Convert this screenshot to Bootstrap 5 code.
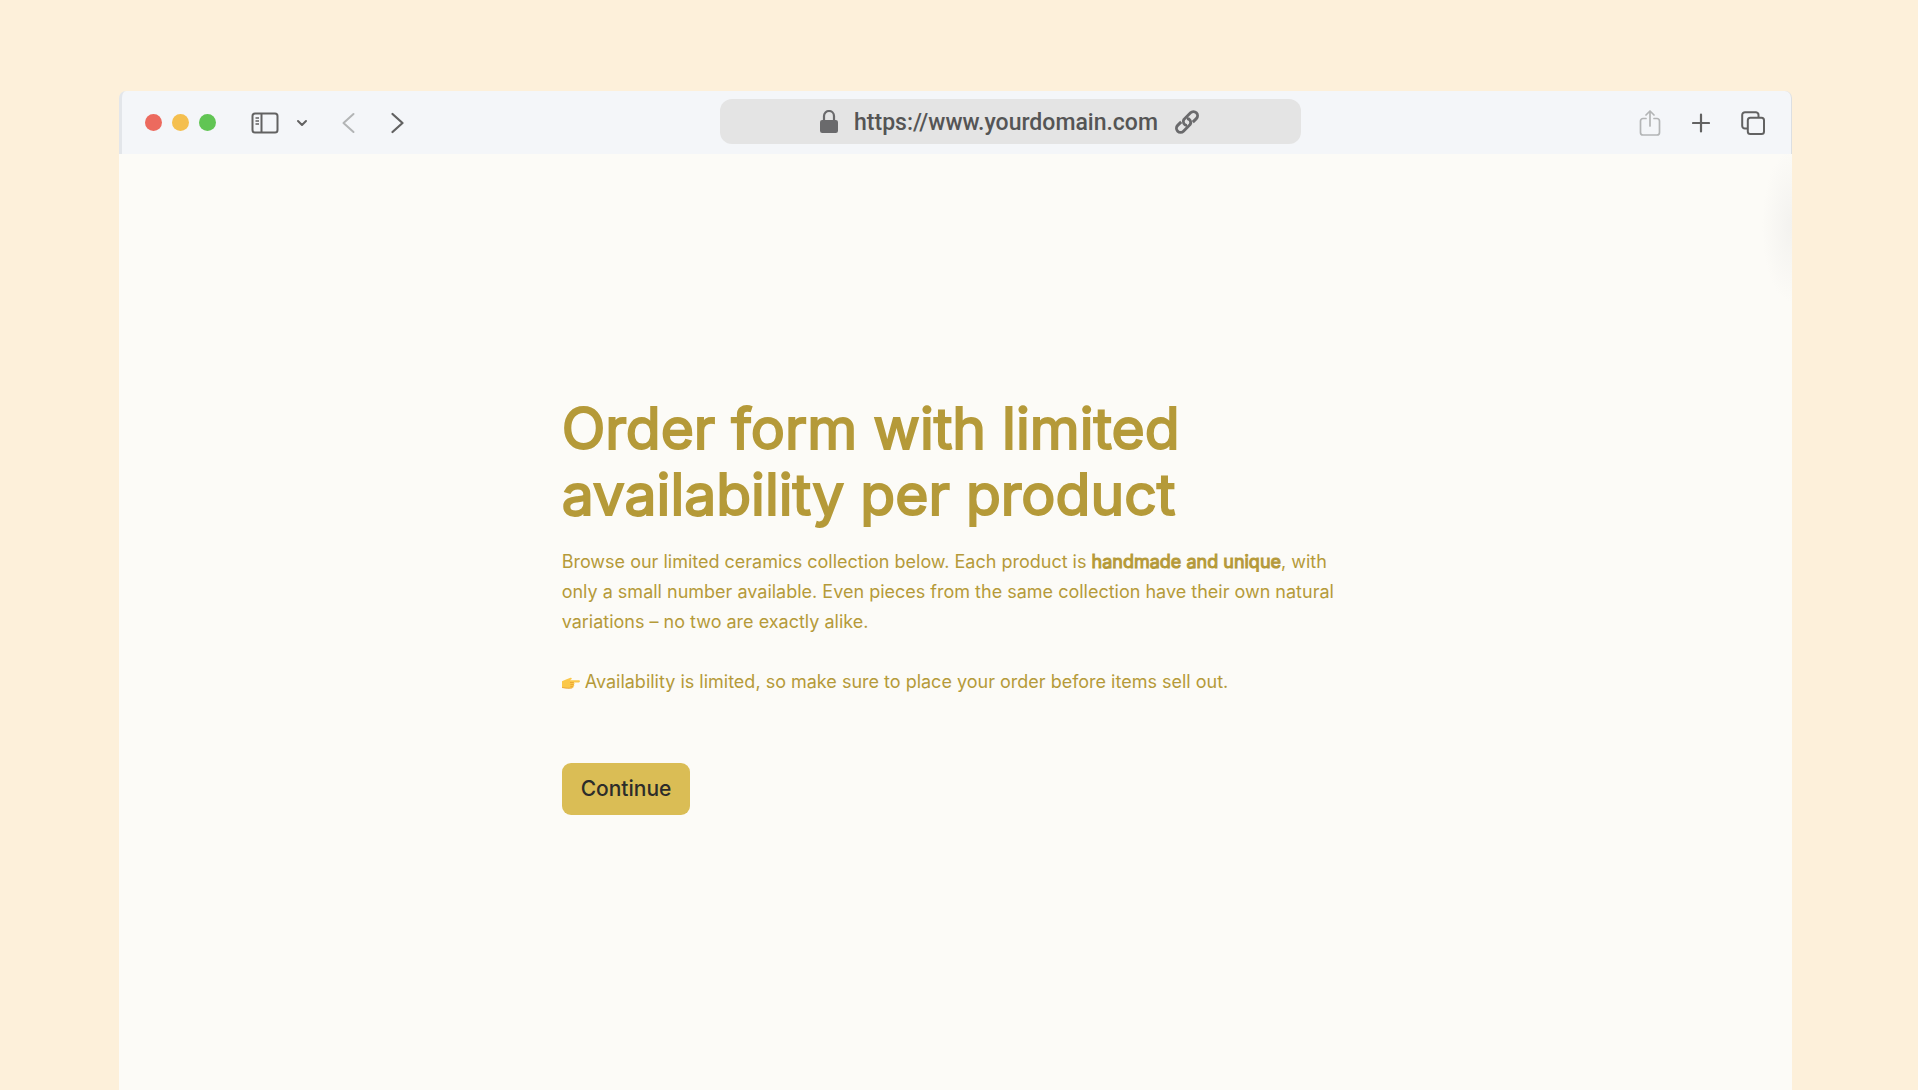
<!DOCTYPE html>
<html lang="en">
<head>
<meta charset="utf-8">
<meta name="viewport" content="width=device-width, initial-scale=1">
<title>Order form with limited availability per product</title>
<link href="https://cdn.jsdelivr.net/npm/bootstrap@5.3.0/dist/css/bootstrap.min.css" rel="stylesheet">
<style>
  body { background: #fdf0da; font-family: Inter, "Liberation Sans", sans-serif; }
  .browser { margin: 91px 6.55% 0 6.2%; }
  .toolbar { height: 63px; background: #f4f6f9; border-radius: 7px 7px 0 0; border-left: 3px solid #e3e6ea; border-right: 1px solid #dcdfe2; }
  .bar-start { width: 35.8%; padding-left: 23px; }
  .bar-end { padding-right: 26px; gap: 31px; }
  .lights { gap: 10px; margin-right: 19px; }
  .light { width: 17px; height: 17px; border-radius: 50%; }
  .light-red { background: #ec6a5e; }
  .light-amber { background: #f4bf4f; }
  .light-green { background: #61c554; }
  .tool { border: 0; padding: 0; background: none; color: #626262; line-height: 0; }
  .tool-muted { color: #b3b5b6; }
  .address { width: 34.8%; height: 45px; margin-bottom: 2px; border-radius: 12px; background: #e4e4e4; color: #6a6a6c; }
  .address input { width: 312px; border: 0; padding: 2px 0 0; background: none; color: #555; font: 500 23px Roboto, "Liberation Sans", sans-serif; outline: 0; }
  .viewport { flex: 1 1 auto; background: radial-gradient(ellipse 30px 76px at 100% 72px, #f3f2ef, #fcfbf7) #fcfbf7; padding-top: 242px; }
  .form-intro { max-width: 788px; color: #b59a39; }
  .form-intro h1 { font-size: 57px; line-height: 66px; font-weight: 400; -webkit-text-stroke: 2px currentColor; margin-bottom: 19px; }
  .form-intro p { font-size: 18px; line-height: 30px; margin-bottom: 30px; }
  .form-intro b { font-weight: 400; -webkit-text-stroke: 1px currentColor; }
  .hand { width: 18px; height: 12px; }
  .btn-continue { --bs-btn-bg: #dabd55; --bs-btn-color: #2c2c2a; --bs-btn-hover-bg: #cfb14a; --bs-btn-hover-color: #2c2c2a; --bs-btn-border-width: 0; --bs-btn-border-radius: 9px; --bs-btn-padding-x: 19px; --bs-btn-padding-y: 10px; --bs-btn-font-size: 21px; --bs-btn-font-weight: 500; line-height: 32px; margin-top: 36px; }
</style>
</head>
<body>
<div class="d-flex flex-column vh-100 overflow-hidden">
<div class="browser d-flex flex-column flex-grow-1">
  <header class="toolbar d-flex align-items-center">
    <div class="bar-start d-flex align-items-center">
      <div class="lights d-flex">
        <span class="light light-red"></span>
        <span class="light light-amber"></span>
        <span class="light light-green"></span>
      </div>
      <button class="tool ms-3 me-3" type="button" aria-label="Sidebar">
        <svg width="28" height="22" viewBox="0 0 28 22" fill="none" stroke="currentColor" stroke-width="2"><rect x="1.500" y="1.500" width="25" height="19" rx="2.500"/><path d="M10.500 2v18"/><path d="M4.500 6h3.500M4.500 9h3.500M4.500 12h3.500" stroke-width="1.500"/></svg>
      </button>
      <button class="tool" type="button" aria-label="Sidebar options">
        <svg width="14" height="10" viewBox="0 0 14 10" fill="none" stroke="currentColor" stroke-width="2" stroke-linecap="round" stroke-linejoin="round"><path d="M3 3l4 4 4-4"/></svg>
      </button>
      <button class="tool tool-muted ms-4 ps-2" type="button" aria-label="Back">
        <svg width="16" height="22" viewBox="0 0 16 22" fill="none" stroke="currentColor" stroke-width="2" stroke-linecap="round" stroke-linejoin="round"><path d="M12.500 2L2.500 11l10 9"/></svg>
      </button>
      <button class="tool ms-4 ps-2" type="button" aria-label="Forward">
        <svg width="16" height="22" viewBox="0 0 16 22" fill="none" stroke="currentColor" stroke-width="2.300" stroke-linecap="round" stroke-linejoin="round"><path d="M3.500 2l10 9-10 9"/></svg>
      </button>
    </div>
    <div class="address d-flex align-items-center justify-content-center">
      <svg class="me-3" width="18" height="24" viewBox="0 0 18 24" fill="none" stroke="currentColor"><path d="M4 11V6a5 5 0 0 1 10 0V11" stroke-width="2.200"/><rect x="0" y="10" width="18" height="13" rx="2.200" fill="currentColor" stroke="none"/></svg>
      <input type="text" value="https://www.yourdomain.com" aria-label="Address">
      <svg class="ms-2" width="26" height="26" viewBox="0 0 26 26" fill="none" stroke="currentColor" stroke-width="2.900"><g transform="rotate(-45 13 13)"><path d="M10.500 15.500A4 4 0 0 1 12.500 9H22a4 4 0 0 1 0 8.200h-5"/><path d="M15.500 10.500A4 4 0 0 1 13.500 17H4A4 4 0 0 1 4 8.800h5"/></g></svg>
    </div>
    <div class="bar-end d-flex align-items-center justify-content-end flex-grow-1">
      <button class="tool tool-muted" type="button" aria-label="Share">
        <svg width="22" height="26" viewBox="0 0 22 26" fill="none" stroke="currentColor" stroke-width="1.700" stroke-linecap="round" stroke-linejoin="round"><path d="M7 8.500H4A2.500 2.500 0 0 0 1.500 11v11.500A2.500 2.500 0 0 0 4 25h14a2.500 2.500 0 0 0 2.500-2.500V11A2.500 2.500 0 0 0 18 8.500h-3M11 16V1.500M7 5l4-4 4 4"/></svg>
      </button>
      <button class="tool" type="button" aria-label="New tab">
        <svg width="18" height="20" viewBox="0 0 18 20" fill="none" stroke="currentColor" stroke-width="2.200" stroke-linecap="round"><path d="M9 1.500v17M1 10h16"/></svg>
      </button>
      <button class="tool" type="button" aria-label="Tab overview">
        <svg width="24" height="24" viewBox="0 0 24 24" fill="none" stroke="currentColor" stroke-width="2"><path d="M6.500 17.500H4A2.800 2.800 0 0 1 1.200 15V4A2.800 2.800 0 0 1 4 1.200h11A2.800 2.800 0 0 1 17.500 4v2.500"/><rect x="6.800" y="6.700" width="16.200" height="16.200" rx="2.500"/></svg>
      </button>
    </div>
  </header>
  <main class="viewport">
    <section class="form-intro mx-auto">
      <h1>Order form with limited availability per product</h1>
      <p>Browse our limited ceramics collection below. Each product is <b>handmade and unique</b>, with only a small number available. Even pieces from the same collection have their own natural variations – no two are exactly alike.</p>
      <p><svg class="hand" viewBox="0 0 18 12" role="img" aria-label="Pointing right"><path d="M0 4.300L4 2.600 8.500.8c1.200-.4 1.700.8.800 1.400L8 3.200h8.800c1.500 0 1.500 2.200 0 2.200h-5c1 .6.800 1.700.1 2 .7.600.4 1.700-.4 1.900.4.800-.1 1.700-1.100 1.800C7 11.800 3.500 11.200 0 10.800z" fill="#fbc84a"/><path d="M8 5.500h3.700M8.400 7.500h3.300M8.300 9.400h2.800M0 10.500c4 .8 7 1 10.200.5" fill="none" stroke="#e59a2c" stroke-width=".7"/></svg> Availability is limited, so make sure to place your order before items sell out.</p>
      <button class="btn btn-continue" type="button">Continue</button>
    </section>
  </main>
</div>
</div>
<script src="https://cdn.jsdelivr.net/npm/bootstrap@5.3.0/dist/js/bootstrap.bundle.min.js"></script>
</body>
</html>
